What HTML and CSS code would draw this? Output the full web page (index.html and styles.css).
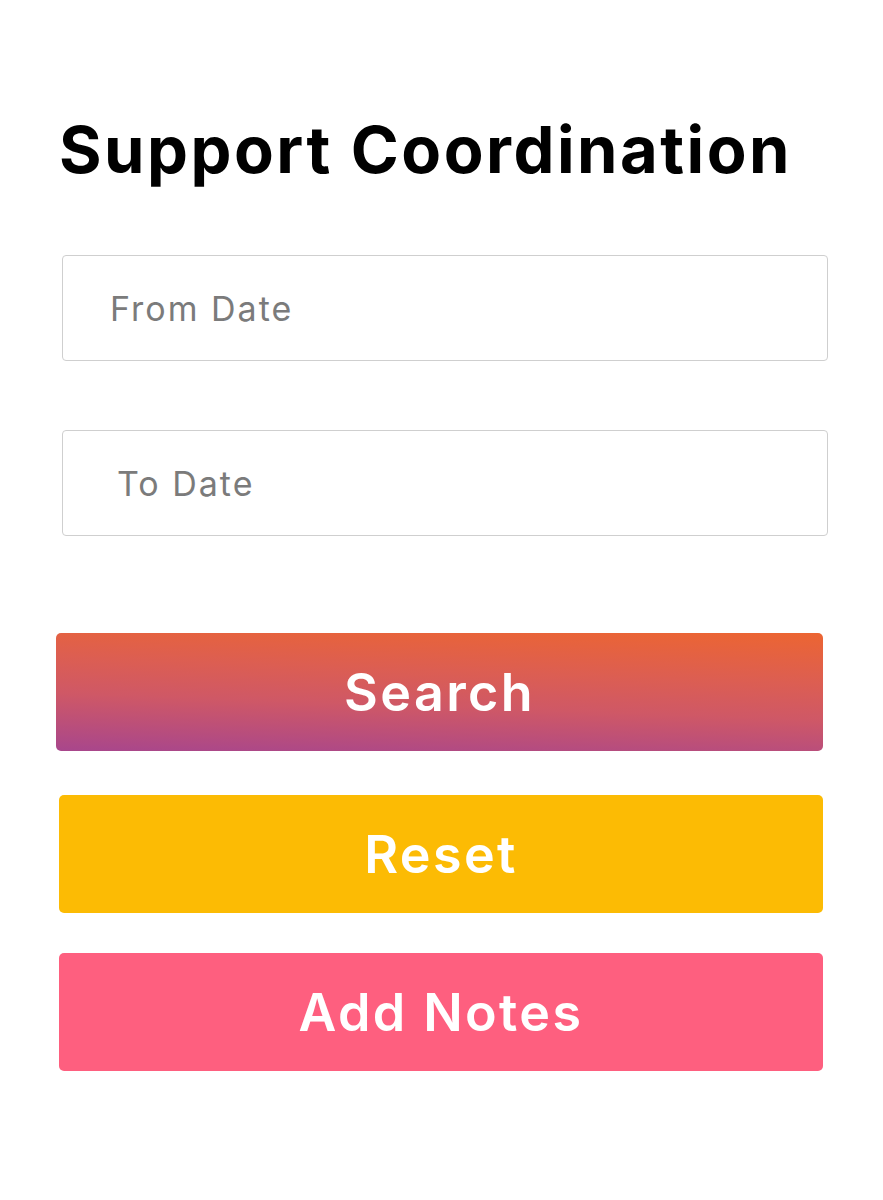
FILE: index.html
```html
<!DOCTYPE html>
<html>
<head>
<meta charset="utf-8">
<link rel="stylesheet" href="styles.css">
</head>
<body>
<div class="page">
  <h1 class="title">Support Coordination</h1>
  <div class="fields">
    <div class="field"><span class="placeholder">From Date</span></div>
    <div class="field field-to"><span class="placeholder">To Date</span></div>
  </div>
  <div class="actions">
    <button class="btn btn-search">Search</button>
    <button class="btn btn-reset">Reset</button>
    <button class="btn btn-notes">Add Notes</button>
  </div>
</div>
</body>
</html>
```
FILE: styles.css
```css
html, body {
  margin: 0;
  padding: 0;
  background: #ffffff;
}
.page {
  width: 883px;
  box-sizing: border-box;
  padding: 110px 55px 0 59px;
  font-family: Inter, "Liberation Sans", sans-serif;
  display: flex;
  flex-direction: column;
}
.title {
  margin: 0;
  font-size: 65px;
  font-weight: 700;
  line-height: 80px;
  color: #000;
  letter-spacing: 2.5px;
}
.fields {
  display: flex;
  flex-direction: column;
  gap: 69px;
  margin-top: 65px;
  padding-left: 3px;
}
.field {
  height: 106px;
  box-sizing: border-box;
  border: 1px solid #cfcfcf;
  border-radius: 4px;
  display: flex;
  align-items: center;
  padding-left: 47px;
}
.field-to {
  padding-left: 54px;
}
.placeholder {
  font-size: 34px;
  color: #7b7b7b;
  font-weight: 400;
  letter-spacing: 2px;
}
.actions {
  display: flex;
  flex-direction: column;
  margin-top: 97px;
  margin-right: 5px;
}
.btn {
  height: 118px;
  border: none;
  border-radius: 5px;
  color: #fff;
  font-family: Inter, "Liberation Sans", sans-serif;
  font-size: 52px;
  font-weight: 600;
  letter-spacing: 2.4px;
  margin-left: 0;
  padding: 0;
}
.btn-search {
  margin-left: -3px;
  background: linear-gradient(182deg, #ec6532 0%, #dc5e52 35%, #cf5866 60%, #a8468c 100%);
}
.btn-reset {
  background: #fcbb04;
  margin-top: 44px;
}
.btn-notes {
  background: #fe5f7f;
  margin-top: 40px;
}
```
